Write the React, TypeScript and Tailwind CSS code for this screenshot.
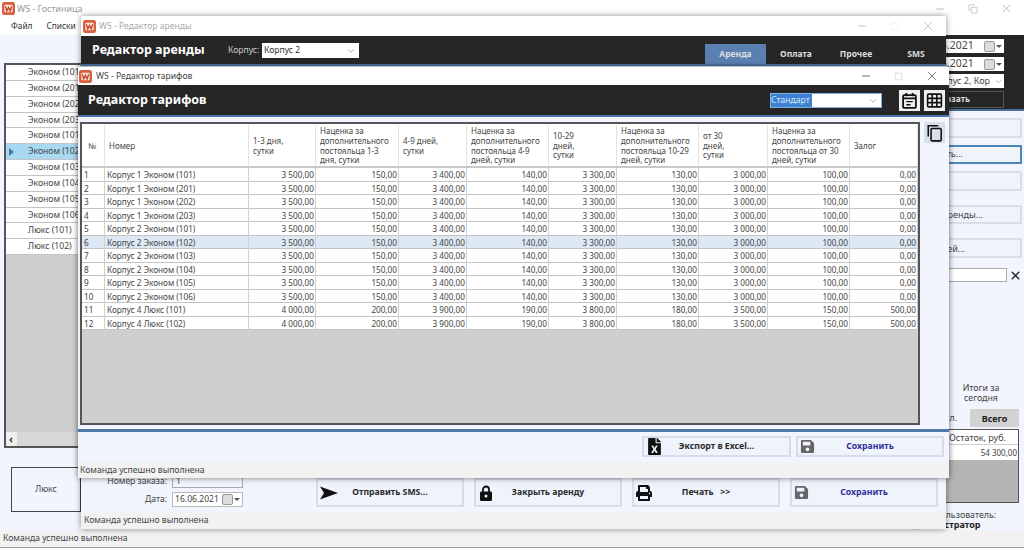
import { ReactNode } from "react"
import { FaFileExcel, FaPrint, FaSave } from "react-icons/fa"
import { ChevronDown, Copy, Minus, Square, X } from "lucide-react"

const COLS = "grid grid-cols-[23px_144px_67px_83px_68px_82px_68px_82px_69px_82px_68px]"

const HEADERS = [
  "№",
  "Номер",
  "1-3 дня,\nсутки",
  "Наценка за\nдополнительного\nпостояльца 1-3\nдня, сутки",
  "4-9 дней,\nсутки",
  "Наценка за\nдополнительного\nпостояльца 4-9\nдней, сутки",
  "10-29\nдней,\nсутки",
  "Наценка за\nдополнительного\nпостояльца 10-29\nдней, сутки",
  "от 30\nдней,\nсутки",
  "Наценка за\nдополнительного\nпостояльца от 30\nдней, сутки",
  "Залог",
]

const ROOMS = [
  "Корпус 1 Эконом (101)",
  "Корпус 1 Эконом (201)",
  "Корпус 1 Эконом (202)",
  "Корпус 1 Эконом (203)",
  "Корпус 2 Эконом (101)",
  "Корпус 2 Эконом (102)",
  "Корпус 2 Эконом (103)",
  "Корпус 2 Эконом (104)",
  "Корпус 2 Эконом (105)",
  "Корпус 2 Эконом (106)",
  "Корпус 4 Люкс (101)",
  "Корпус 4 Люкс (102)",
]

const ECONOMY = ["3 500,00", "150,00", "3 400,00", "140,00", "3 300,00", "130,00", "3 000,00", "100,00", "0,00"]
const LUX = ["4 000,00", "200,00", "3 900,00", "190,00", "3 800,00", "180,00", "3 500,00", "150,00", "500,00"]

const LIST = [
  "Эконом (101)",
  "Эконом (201)",
  "Эконом (202)",
  "Эконом (203)",
  "Эконом (101)",
  "Эконом (102)",
  "Эконом (103)",
  "Эконом (104)",
  "Эконом (105)",
  "Эконом (106)",
  "Люкс (101)",
  "Люкс (102)",
]

function Logo({ className }: { className: string }) {
  return (
    <svg viewBox="0 0 14 14" className={className}>
      <rect width="14" height="14" rx="2.5" fill="#d9603f" />
      <rect x="2.5" y="3" width="9" height="8" rx="1" fill="#f6e4d8" />
      <polyline points="3.6,4.6 5.2,9.6 7,6 8.8,9.6 10.4,4.6" fill="none" stroke="#c8402a" strokeWidth="1.4" />
    </svg>
  )
}

function WinControls({ color, gap }: { color: string; gap: string }) {
  return (
    <div className={`flex items-center ${gap} ${color}`}>
      <Minus size={12} strokeWidth={1.4} />
      <Square size={9} strokeWidth={1} className="opacity-40" />
      <X size={14} strokeWidth={1.2} />
    </div>
  )
}

function ActionButton({ icon, label, blue, className }: { icon: ReactNode; label: string; blue?: boolean; className: string }) {
  return (
    <div className={`flex items-center border-2 border-[#d6dce8] bg-[#eff3fc] ${className}`}>
      <span className="flex w-[26px] shrink-0 justify-start pl-[2px]">{icon}</span>
      <span className={`flex-1 text-center font-['DejaVu_Sans',sans-serif] text-[8.7px] font-bold whitespace-pre ${blue ? "text-[#2f2f9e]" : "text-[#2a2a2a]"}`}>
        {label}
      </span>
      <span className="w-[26px] shrink-0" />
    </div>
  )
}

function DateIcon() {
  return (
    <span className="flex items-center gap-[1px]">
      <span className="h-[11px] w-[11px] rounded-[2px] border border-[#999] bg-[#dcdcdc]" />
      <span className="h-0 w-0 border-x-[3px] border-t-[3px] border-x-transparent border-t-[#555]" />
    </span>
  )
}

function SideButton({ text, focused, className }: { text: string; focused?: boolean; className: string }) {
  return (
    <div className={`flex items-center justify-end border-2 bg-[#eff3fc] text-[9px] text-[#444] ${focused ? "border-[#4f86b8]" : "border-[#d8dde8]"} ${className}`}>
      {text}
    </div>
  )
}

function MainWindow() {
  return (
    <div className="flex h-full flex-col bg-[#f2f5fd]">
      <div className="flex h-[17px] items-center bg-white pl-[2px] pr-[11px]">
        <Logo className="h-[13px] w-[13px]" />
        <span className="ml-[2px] text-[8.9px] text-[#999]">WS - Гостиница</span>
        <div className="ml-auto flex items-center gap-[22px] text-[#999]">
          <Minus size={12} strokeWidth={1.2} />
          <Copy size={10} strokeWidth={1.2} />
          <X size={13} strokeWidth={1.2} />
        </div>
      </div>
      <div className="flex h-[18px] items-center gap-[14px] bg-white pl-[11px] text-[8.3px] text-[#333]">
        <span>Файл</span>
        <span>Списки</span>
      </div>

      <div className="flex flex-1 justify-between overflow-hidden">
        <div className="flex w-[110px] flex-col pl-[4px] pt-[28px]">
          <div className="flex h-[385px] w-[100px] flex-col border-2 border-[#555] bg-[#cfcfcf] text-[8.6px] text-[#444]">
            {LIST.map((name, i) => (
              <div key={i} className={`flex h-[15.85px] shrink-0 items-center border-b border-[#c4c4c4] pl-[22px] ${i === 5 ? "bg-[#a9d9f2]" : "bg-white"}`}>
                {i === 5 && <span className="absolute left-[9px] h-0 w-0 border-y-[4px] border-l-[5px] border-y-transparent border-l-[#3b7fa8]" />}
                {name}
              </div>
            ))}
            <div className="flex-1" />
            <div className="flex h-[14px] items-center bg-[#efefef] pl-[3px] text-[#333]">
              <span className="text-[11px] font-bold">‹</span>
              <span className="ml-[4px] h-full flex-1 bg-[#d8d8d8]" />
            </div>
          </div>
          <div className="ml-[7px] mt-[19px] flex h-[45px] w-[70px] items-center justify-center border border-[#444] bg-[#f2f5fd] text-[8.6px] text-[#444]">
            Люкс
          </div>
        </div>

        <div className="flex w-[174px] flex-col text-[8.8px]">
          <div className="flex h-[76px] flex-col items-end border-b-2 border-[#4a6d94] bg-[#262626] pr-[20px] pt-[4px]">
            <div className="flex h-[14px] w-[85px] items-center justify-between bg-white pl-[1px] pr-[2px] text-[10.5px] text-[#444]">
              16.06.2021
              <DateIcon />
            </div>
            <div className="mt-[4px] flex h-[14px] w-[85px] items-center justify-between bg-white pl-[1px] pr-[2px] text-[10.5px] text-[#444]">
              16.06.2021
              <DateIcon />
            </div>
            <div className="mt-[3px] flex h-[14px] w-[80px] items-center justify-between overflow-hidden whitespace-nowrap bg-white pl-[7px] pr-[1px] text-[9px] text-[#444]">
              Корпус 2, Кор
              <ChevronDown size={9} strokeWidth={1.4} className="shrink-0 text-[#777]" />
            </div>
            <div className="mt-[3px] flex h-[17px] w-[130px] items-center justify-end border border-[#4a5560] pr-[33px] font-['DejaVu_Sans',sans-serif] text-[8.5px] font-bold text-[#ddd]">
              Показать
            </div>
          </div>

          <SideButton className="mr-[2px] mt-[7px] h-[20px] pr-[40px]" text="" />
          <SideButton className="mr-[2px] mt-[7px] h-[19px] pr-[57px]" text="Оплатить..." focused />
          <SideButton className="mr-[2px] mt-[7px] h-[20px] pr-[40px]" text="" />
          <SideButton className="mr-[2px] mt-[14px] h-[20px] pr-[37px]" text="Итог аренды..." />
          <SideButton className="mr-[2px] mt-[14px] h-[20px] pr-[55px]" text="Гостей..." />

          <div className="mt-[10px] flex h-[14px] items-stretch">
            <div className="w-[157px] border border-[#aaa] bg-white" />
            <div className="flex flex-1 items-center justify-center text-[#222]">
              <X size={13} strokeWidth={2.6} />
            </div>
          </div>

          <div className="mr-[18px] mt-[101px] w-[50px] self-end text-center leading-[10px] text-[#444]">
            Итоги за сегодня
          </div>
          <div className="mt-[6px] flex h-[18px] items-stretch justify-end pr-[5px]">
            <span className="mr-[13px] self-center text-[#444]">Начисл.</span>
            <span className="flex w-[49px] items-center justify-center bg-[#d2d2d2] font-['DejaVu_Sans',sans-serif] text-[9px] font-bold text-[#222]">
              Всего
            </span>
          </div>
          <div className="ml-auto mr-[5px] mt-[2px] flex h-[74px] w-[110px] flex-col border border-[#555] bg-[#b4b4b4] text-[#444]">
            <div className="flex h-[15px] items-center border-b border-[#ccc] bg-white pl-[39px] text-[9px]">Остаток, руб.</div>
            <div className="flex h-[15px] items-center justify-end bg-white pr-[1px] text-[8px]">54 300,00</div>
          </div>
          <div className="ml-[84px] mt-[7px] leading-[10px] text-[#444]">Пользователь:</div>
          <div className="ml-[57px] font-['DejaVu_Sans',sans-serif] text-[9px] font-bold leading-[10px] text-[#222]">Администратор</div>
        </div>
      </div>

      <div className="flex h-[18px] items-center border-b border-[#999] bg-[#f2f2f2] pl-[3px] text-[8.6px] text-[#444]">
        Команда успешно выполнена
      </div>
    </div>
  )
}

function RentWindow() {
  return (
    <div className="absolute left-[81px] top-[16px] flex h-[513px] w-[865px] flex-col bg-[#f2f5fd] text-[8.6px] shadow-[0_0_6px_rgba(0,0,0,0.45)]">
      <div className="flex h-[20px] items-center bg-white pl-[2px] pr-[11px]">
        <Logo className="h-[13px] w-[13px]" />
        <span className="ml-[3px] text-[#aaa]">WS - Редактор аренды</span>
        <div className="ml-auto">
          <WinControls color="text-[#aaa]" gap="gap-[22px]" />
        </div>
      </div>
      <div className="flex h-[30px] items-end border-b-2 border-[#4a74a4] bg-[#262626]">
        <div className="flex h-full items-center pt-[1px]">
          <span className="ml-[11px] w-[136px] font-['DejaVu_Sans',sans-serif] text-[12.5px] font-bold text-white">Редактор аренды</span>
          <span className="w-[31px] text-[#ccc]">Корпус:</span>
          <div className="ml-[3px] flex h-[15px] w-[97px] items-center justify-between bg-white pl-[2px] pr-[3px] text-[#333]">
            Корпус 2
            <ChevronDown size={10} strokeWidth={1.4} className="text-[#777]" />
          </div>
        </div>
        <div className="ml-auto flex h-[20px] items-stretch font-['DejaVu_Sans',sans-serif] text-[8.5px] font-bold text-[#ddd]">
          <span className="flex w-[61px] items-center justify-center bg-[#5a80b2]">Аренда</span>
          <span className="flex w-[60px] items-center justify-center">Оплата</span>
          <span className="flex w-[60px] items-center justify-center">Прочее</span>
          <span className="flex w-[60px] items-center justify-center">SMS</span>
        </div>
      </div>
      <div className="flex-1" />
      <div className="flex items-end pb-[5px] text-[#444]">
        <div className="flex w-[162px] flex-col items-end gap-[4px]">
          <div className="flex items-center gap-[5px]">
            Номер заказа:
            <span className="flex h-[12px] w-[71px] items-center border border-[#aaa] pl-[3px]">1</span>
          </div>
          <div className="flex items-center gap-[5px]">
            Дата:
            <span className="flex h-[15px] w-[71px] items-center justify-between border border-[#bbb] bg-white px-[2px]">
              16.06.2021
              <DateIcon />
            </span>
          </div>
        </div>
        <div className="ml-[73px] flex gap-[10px]">
          <ActionButton
            className="h-[29px] w-[148px]"
            label="Отправить SMS..."
            icon={
              <svg viewBox="0 0 18 14" className="h-[14px] w-[18px]">
                <path d="M0 0.5 L18 7 L0 13.5 L4 7 Z" fill="#111" />
              </svg>
            }
          />
          <ActionButton
            className="h-[29px] w-[148px]"
            label="Закрыть аренду"
            icon={
              <svg viewBox="0 0 12 16" className="ml-[2px] h-[16px] w-[12px]">
                <path d="M3 7V4.5a3 3 0 0 1 6 0V7" fill="none" stroke="#111" strokeWidth="1.8" />
                <rect y="6.5" width="12" height="9.5" rx="1.2" fill="#111" />
                <circle cx="6" cy="11" r="1.5" fill="#eff3fc" />
              </svg>
            }
          />
          <ActionButton className="h-[29px] w-[148px]" label="Печать   >>" icon={<FaPrint size={16} className="text-[#111]" />} />
          <ActionButton className="h-[29px] w-[148px]" label="Сохранить" blue icon={<FaSave size={15} className="text-[#666]" />} />
        </div>
      </div>
      <div className="flex h-[17px] items-center bg-[#f2f2f2] pl-[3px] text-[#444]">Команда успешно выполнена</div>
    </div>
  )
}

function TariffWindow() {
  return (
    <div className="absolute left-[78px] top-[67px] flex h-[411px] w-[871px] flex-col bg-[#f2f5fd] text-[8.6px] shadow-[0_0_6px_rgba(0,0,0,0.5)]">
      <div className="flex h-[18px] items-center bg-white pl-[1px] pr-[10px]">
        <Logo className="h-[13px] w-[13px]" />
        <span className="ml-[4px] text-[#444]">WS - Редактор тарифов</span>
        <div className="ml-auto">
          <WinControls color="text-[#333]" gap="gap-[22px]" />
        </div>
      </div>
      <div className="flex h-[32px] items-center border-b-2 border-[#4a74a4] bg-[#262626] pl-[10px] pr-[4px] pt-[1px]">
        <span className="font-['DejaVu_Sans',sans-serif] text-[12.5px] font-bold text-white">Редактор тарифов</span>
        <div className="ml-auto flex h-[15px] w-[112px] items-center justify-between border border-[#7fb0e0] bg-white pr-[3px]">
          <span className="bg-[#3d82d2] pr-[2px] text-[#d8e6f6]">Стандарт</span>
          <ChevronDown size={10} strokeWidth={1.4} className="text-[#777]" />
        </div>
        <span className="ml-[17px] flex h-[21px] w-[21px] items-center justify-center bg-[#efefef]">
          <svg viewBox="0 0 16 16" className="h-[17px] w-[17px]" fill="none" stroke="#111" strokeWidth="1.7">
            <rect x="2" y="3" width="12" height="12" rx="1" />
            <path d="M2 6h12M5 1v3M11 1v3" />
            <path d="M5 9h6M5 12h4" strokeWidth="1.2" />
          </svg>
        </span>
        <span className="ml-[4px] flex h-[21px] w-[21px] items-center justify-center bg-[#efefef]">
          <svg viewBox="0 0 16 16" className="h-[17px] w-[17px]" fill="none" stroke="#111" strokeWidth="1.5">
            <rect x="1.5" y="2" width="13" height="12" rx="1" />
            <path d="M1.5 6h13M1.5 10h13M5.8 2v12M10.2 2v12" />
          </svg>
        </span>
      </div>

      <div className="flex flex-1 pl-[2px] pr-[4px] pt-[5px]">
        <div className="flex h-[303px] w-[840px] flex-col border-2 border-[#555] bg-[#cfcfcf] text-[8.2px] text-[#444]">
          <div className={`${COLS} h-[44px] shrink-0 border-b-2 border-[#c8c8c8] bg-white pt-[1px] text-[8px] leading-[9.7px]`}>
            {HEADERS.map((h, i) => (
              <div key={i} className={`flex items-center whitespace-pre-line border-r border-[#e2e2e2] ${i === 0 ? "pl-[6px]" : "pl-[4px]"}`}>
                {h}
              </div>
            ))}
          </div>
          {ROOMS.map((room, i) => (
            <div key={i} className={`${COLS} h-[13.5px] shrink-0 border-b border-[#c4c4c4] leading-[14px] ${i === 5 ? "bg-[#dce8f4]" : "bg-white"}`}>
              <div className="border-r border-[#d0d0d0] pl-[2px]">{i + 1}</div>
              <div className="border-r border-[#d0d0d0] pl-[2px] whitespace-nowrap">{room}</div>
              {(i < 10 ? ECONOMY : LUX).map((v, j) => (
                <div key={j} className="border-r border-[#d0d0d0] pr-[1px] text-right">
                  {v}
                </div>
              ))}
            </div>
          ))}
        </div>
        <span className="ml-[4px] flex h-[21px] w-[21px] items-center justify-center bg-[#d8dfec]">
          <svg viewBox="0 0 16 16" className="h-[18px] w-[18px]" fill="none" stroke="#111" strokeWidth="1.4">
            <path d="M2 11V1.5h9" />
            <rect x="4.5" y="4" width="9" height="11" rx="1" />
          </svg>
        </span>
      </div>

      <div className="flex h-[33px] items-start justify-end gap-[5px] border-t-[3px] border-[#4f7ba8] pr-[5px] pt-[4px]">
        <ActionButton className="h-[21px] w-[149px]" label="Экспорт в Excel..." icon={<FaFileExcel size={17} className="text-[#111]" />} />
        <ActionButton className="h-[21px] w-[148px]" label="Сохранить" blue icon={<FaSave size={15} className="text-[#666]" />} />
      </div>
      <div className="flex h-[16px] items-center bg-[#f2f2f2] pl-[2px] text-[#444]">Команда успешно выполнена</div>
    </div>
  )
}

export default function App() {
  return (
    <div className="relative h-[548px] w-[1024px] overflow-hidden font-['Noto_Sans',sans-serif]">
      <MainWindow />
      <RentWindow />
      <TariffWindow />
    </div>
  )
}
